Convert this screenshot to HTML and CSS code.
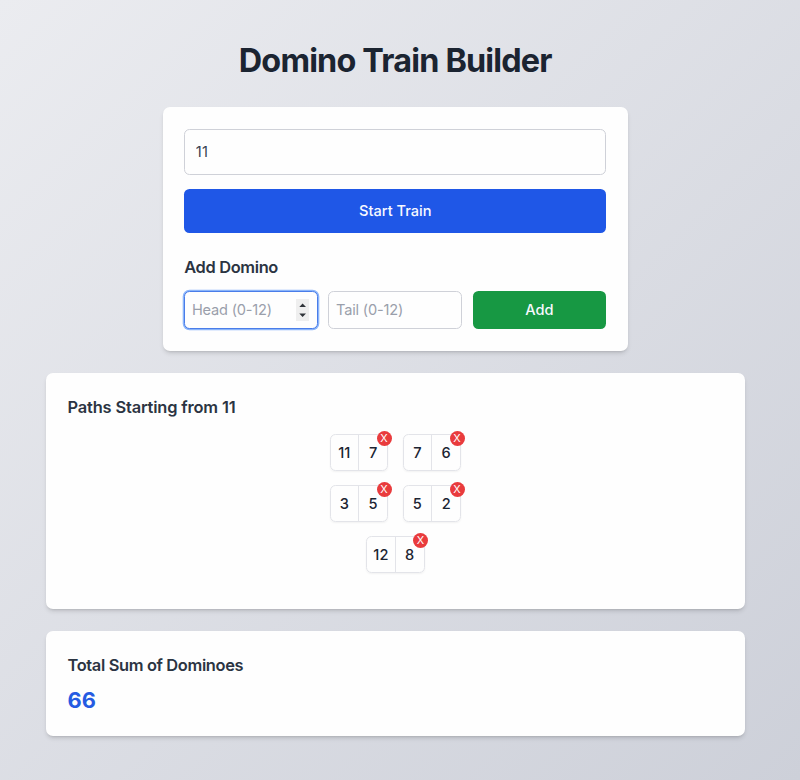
FILE: index.html
```html
<!DOCTYPE html>
<html lang="en">
<head>
<meta charset="utf-8">
<title>Domino Train Builder</title>
<link rel="stylesheet" href="styles.css">
</head>
<body>
<main class="page">
  <h1 class="title"><span>Domino Train Builder</span></h1>
  <section class="card builder">
    <input class="field start-field" type="text" value="11" aria-label="Start number">
    <button class="btn start-btn"><span>Start Train</span></button>
    <h2 class="heading"><span>Add Domino</span></h2>
    <div class="add-row">
      <div class="field small focused"><span>Head (0-12)</span>
        <svg class="spinner" viewBox="0 0 13 22" aria-hidden="true"><rect width="13" height="22" fill="#efefef"/><path d="M3.3 8.1 6.6 4.4 10 8.1ZM3.3 14.5H10L6.6 18.1Z" fill="#30343a"/></svg>
      </div>
      <div class="field small"><span>Tail (0-12)</span></div>
      <button class="btn add-btn"><span>Add</span></button>
    </div>
  </section>
  <section class="card paths">
    <h2 class="heading paths-heading"><span>Paths Starting from 11</span></h2>
    <div class="train">
      <div class="row">
        <div class="domino"><span>11</span><span>7</span><button class="remove">X</button></div>
        <div class="domino"><span>7</span><span>6</span><button class="remove">X</button></div>
      </div>
      <div class="row">
        <div class="domino"><span>3</span><span>5</span><button class="remove">X</button></div>
        <div class="domino"><span>5</span><span>2</span><button class="remove">X</button></div>
      </div>
      <div class="row">
        <div class="domino"><span>12</span><span>8</span><button class="remove">X</button></div>
      </div>
    </div>
  </section>
  <section class="card total">
    <h2 class="heading"><span>Total Sum of Dominoes</span></h2>
    <p class="sum"><span>66</span></p>
  </section>
</main>
</body>
</html>
```
FILE: styles.css
```css
* { box-sizing: border-box; margin: 0; }
body {
  height: 780px;
  overflow: hidden;
  background: linear-gradient(to bottom right, #ebecf0, #cdd0d9);
  font-family: Inter, "Liberation Sans", sans-serif;
  color: #1b2431;
}
.page {
  width: 698.5px;
  margin-left: 46px;
  padding-top: 40px;
  display: flex;
  flex-direction: column;
  align-items: center;
}
.title {
  height: 40px;
  margin-bottom: 27.3px;
  font-size: 32.4px;
  line-height: 42px;
  font-weight: 700;
  letter-spacing: -0.82px;
  white-space: nowrap;
}
.card {
  width: 100%;
  padding: 21.5px;
  background: #fefefe;
  border-radius: 7px;
  box-shadow: 0 3px 5px -1px rgb(0 0 0 / 14%), 0 2px 3px -2px rgb(0 0 0 / 16%);
}
.builder { width: 465px; height: 243.5px; }
.field {
  width: 100%;
  border: 1px solid #cfd1d8;
  border-radius: 5.5px;
  background: #fefefe;
  font: 400 14.6px/20px Inter, "Liberation Sans", sans-serif;
  letter-spacing: -0.2px;
  color: #374151;
  outline: none;
}
.start-field { display: block; height: 46px; padding: 0 10.5px; letter-spacing: 0.3px; }
.btn {
  border: 0;
  border-radius: 5.5px;
  color: #f7f9ff;
  font: 500 14.6px/20px Inter, "Liberation Sans", sans-serif;
  letter-spacing: 0;
}
.start-btn {
  display: block;
  width: 100%;
  height: 44px;
  margin-top: 14px;
  background: #1f57e7;
}
.heading {
  font-size: 16.4px;
  line-height: 25px;
  font-weight: 600;
  letter-spacing: -0.34px;
  color: #2b3442;
}
.paths-heading { letter-spacing: -0.15px; }
.builder .heading { margin: 22px 0 11px; }
.add-row { display: grid; grid-template-columns: repeat(3, 1fr); gap: 10.5px; }
.small {
  height: 38px;
  padding: 0 7.5px 0 6.7px;
  display: flex;
  align-items: center;
  justify-content: space-between;
  color: #9a9fab;
}
.focused { border-color: #4a7de9; box-shadow: 0 0 0 1.3px #8bb5fa; }
.spinner { width: 13px; height: 22px; }
.add-btn { height: 38px; background: #179843; }
.paths, .total { padding-top: 22.3px; }
.paths { height: 236px; margin-top: 22px; }
.train {
  display: flex;
  flex-direction: column;
  align-items: center;
  gap: 14px;
  margin-top: 13.7px;
}
.row { display: flex; gap: 14.5px; }
.domino {
  position: relative;
  display: flex;
  width: 58.5px;
  height: 37px;
  border: 1px solid #e3e4e9;
  border-radius: 5.5px;
  box-shadow: 0 1px 2px rgb(0 0 0 / 5%);
  font-size: 14.6px;
  line-height: 36px;
  font-weight: 500;
  text-align: center;
  color: #1b2432;
}
.domino > span { flex: 1; }
.domino > span + span { border-left: 1px solid #e3e4e9; }
.remove {
  position: absolute;
  top: -4px;
  right: -4.5px;
  width: 15px;
  height: 15px;
  padding: 0;
  border: 0;
  border-radius: 50%;
  background: #e93b3d;
  color: #fff;
  font: 400 10.9px/15px Inter, "Liberation Sans", sans-serif;
}
.total { height: 105.5px; margin-top: 22px; }
.sum {
  margin-top: 6.7px;
  font-size: 21.8px;
  line-height: 30px;
  font-weight: 700;
  letter-spacing: 0.2px;
  color: #255be2;
}
```
